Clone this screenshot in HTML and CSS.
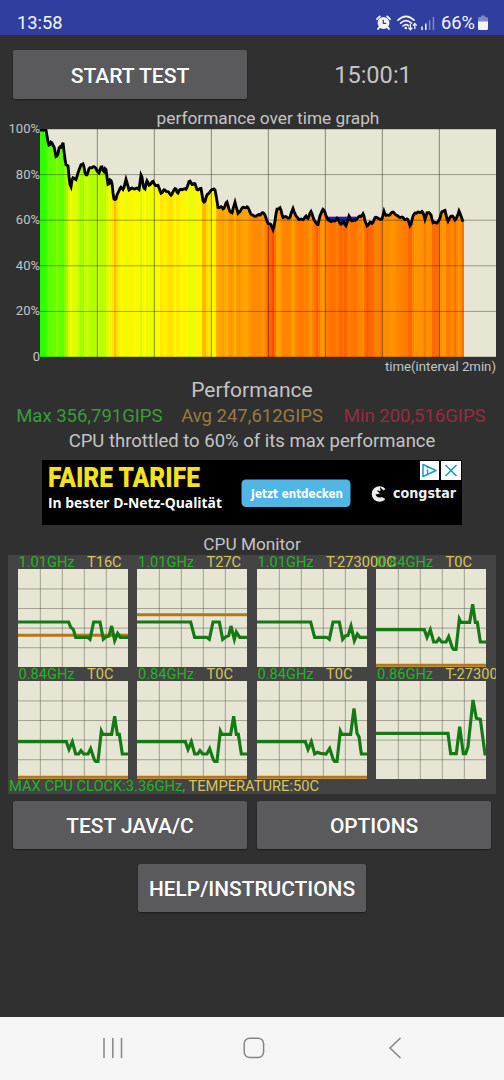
FILE: index.html
```html
<!DOCTYPE html>
<html lang="en">
<head>
    <meta charset="UTF-8">
    <meta name="viewport" content="width=device-width, initial-scale=1.0">
    <title>CPU Throttling Test</title>
    <link rel="stylesheet" href="styles.css">
</head>
<body>

    <header class="status-bar">
        <span class="clock">13:58</span>
        <div class="status-icons">
            <svg class="icon-alarm" width="15" height="15" viewBox="0 0 15 15">
                <circle cx="7.5" cy="8" r="5.9" fill="#f3f4fb"/>
                <path d="M1 4.2L3.8 1.4M14 4.2L11.2 1.4M3.2 12.4L2 14M11.8 12.4L13 14" stroke="#f3f4fb" stroke-width="1.8" stroke-linecap="round"/>
                <path d="M7.3 4.8V8.3H10.2" fill="none" stroke="#303f9f" stroke-width="1.3"/>
            </svg>
            <svg class="icon-wifi" width="21" height="16" viewBox="0 0 21 16">
                <path d="M1 5.2Q9 -2.4 17 5.2M3.6 8.2Q9 3.2 14.4 8.2M6 11Q9 8.4 11.4 10.6" fill="none" stroke="#f3f4fb" stroke-width="1.6" stroke-linecap="round"/>
                <circle cx="8.8" cy="13" r="1.3" fill="#f3f4fb"/>
                <path d="M13.4 9V14.6M11.4 12.6L13.4 14.8L15.4 12.6M17.8 14V8.6M15.9 10.6L17.8 8.4L19.7 10.6" fill="none" stroke="#f3f4fb" stroke-width="1.3"/>
            </svg>
            <svg class="icon-signal" width="14" height="14" viewBox="0 0 14 14">
                <path d="M1 14V10.6M4.8 14V7.6" stroke="#f3f4fb" stroke-width="1.5"/>
                <path d="M8.6 14V4.2M12.4 14V1" stroke="#7f88c6" stroke-width="1.5"/>
            </svg>
            <span class="percent">66%</span>
            <svg class="icon-battery" width="10" height="16" viewBox="0 0 10 16">
                <path d="M3 .5H7V2H8.5Q10 2 10 3.5V7H0V3.5Q0 2 1.5 2H3Z" fill="#7f88c6"/>
                <path d="M0 6.5H10V13.5Q10 15 8.5 15H1.5Q0 15 0 13.5Z" fill="#f3f4fb"/>
            </svg>
        </div>
    </header>

    <main class="app">
        <div class="row top-row">
            <button class="btn">START TEST</button>
            <div class="timer">15:00:1</div>
        </div>

        <div class="graph-title">performance over time graph</div>
        <div class="graph">
            <div class="y-axis">
                <span>100%</span>
                <span>80%</span>
                <span>60%</span>
                <span>40%</span>
                <span>20%</span>
                <span>0</span>
            </div>
            <svg class="plot" id="plot" viewBox="0 0 1368 684" preserveAspectRatio="none"></svg>
        </div>
        <div class="x-label">time(interval 2min)</div>

        <div class="perf-title">Performance</div>
        <div class="row stats">
            <span class="max">Max 356,791GIPS</span>
            <span class="avg">Avg 247,612GIPS</span>
            <span class="min">Min 200,516GIPS</span>
        </div>
        <div class="throttle">CPU throttled to 60% of its max performance</div>

        <div class="ad">
            <svg width="420" height="65" viewBox="0 0 420 65">
                <text class="ad-head" x="6" y="26.5" textLength="152" lengthAdjust="spacingAndGlyphs">FAIRE TARIFE</text>
                <text class="ad-sub" x="6" y="48" textLength="174" lengthAdjust="spacingAndGlyphs">In bester D-Netz-Qualität</text>
                <rect x="199.5" y="19.5" width="109" height="27.5" rx="4.5" fill="#51b5e6"/>
                <text class="ad-cta" x="209" y="38" textLength="92" lengthAdjust="spacingAndGlyphs">Jetzt entdecken</text>
                <path d="M343.500 29A7.800 7.800 0 1 0 343.500 39L339.800 37A4.500 4.500 0 0 1 333.500 34.500L338 33.500L334.500 30.500L338.500 31L338 27L341.500 30.500Z" fill="#eee"/>
                <text class="ad-brand" x="351" y="38" textLength="63" lengthAdjust="spacingAndGlyphs">congstar</text>
            </svg>
            <div class="ad-badges">
                <svg width="19" height="19" viewBox="0 0 19 19">
                    <path d="M3 3.5V15.5L16 9.5Z" fill="none" stroke="#1a9cba" stroke-width="1.5" stroke-linejoin="round"/>
                    <path d="M7.5 8.5V13M7.5 5.8V7.3" stroke="#1a9cba" stroke-width="1.5"/>
                </svg>
                <svg width="20" height="19" viewBox="0 0 20 19">
                    <path d="M4.500 4L15.500 15M15.500 4L4.500 15" stroke="#1a9cba" stroke-width="1.6"/>
                </svg>
            </div>
        </div>

        <div class="monitor-title">CPU Monitor</div>
        <div class="monitor">
            <div class="cores" id="cores"></div>
            <div class="monitor-footer"><span class="clock-max">MAX CPU CLOCK:3.36GHz,</span> <span class="temp">TEMPERATURE:50C</span></div>
        </div>

        <div class="row bottom-row">
            <button class="btn">TEST JAVA/C</button>
            <button class="btn">OPTIONS</button>
        </div>
        <button class="btn btn-help">HELP/INSTRUCTIONS</button>
    </main>

    <nav class="nav-bar">
        <svg width="22" height="22" viewBox="0 0 22 22">
            <path d="M2 1V21M10.8 1V21M19.5 1V21" stroke="#858585" stroke-width="1.5"/>
        </svg>
        <svg width="22" height="22" viewBox="0 0 22 22">
            <rect x="1.2" y="1.2" width="19.4" height="19.4" rx="5.5" fill="none" stroke="#858585" stroke-width="1.5"/>
        </svg>
        <svg width="22" height="22" viewBox="0 0 22 22">
            <path d="M16.500 1L6 11L16.500 21" fill="none" stroke="#858585" stroke-width="1.5"/>
        </svg>
    </nav>

    <script src="script.js"></script>
</body>
</html>
```

FILE: styles.css
```css
* {
    box-sizing: border-box;
}

body {
    margin: 0;
    width: 504px;
    height: 1080px;
    display: flex;
    flex-direction: column;
    overflow: hidden;
    background-color: #303030;
    color: #c4c4c4;
    font-family: Roboto, "Liberation Sans", sans-serif;
}

svg {
    display: block;
    flex-shrink: 0;
}

/* Status bar */
.status-bar {
    height: 35px;
    padding: 10px 16px 0 17px;
    display: flex;
    justify-content: space-between;
    background-color: #303f9f;
    color: #f3f4fb;
    font-size: 18.3px;
    line-height: 26px;
}

.status-icons {
    display: flex;
    align-items: center;
}

.icon-wifi {
    margin-left: 6px;
}

.icon-signal {
    margin: 0 6px 0 3px;
}

.icon-battery {
    margin-left: 3px;
}

/* Main screen */
.app {
    flex: 1;
    padding: 15px 8px 0;
    display: flex;
    flex-direction: column;
}

.row {
    display: flex;
}

.btn {
    flex: 1;
    height: 48px;
    margin: 0 5px;
    padding: 1px 0 0;
    border: none;
    border-radius: 2px;
    background-color: #5a5a5c;
    box-shadow: 0 1px 2px rgba(0, 0, 0, 0.4);
    color: #fff;
    font-family: inherit;
    font-size: 20.9px;
    font-weight: 500;
}

.top-row .btn {
    height: 49px;
    padding-top: 2px;
    font-size: 21.1px;
}

.timer {
    flex: 1;
    margin: 0 6px 0 4px;
    line-height: 50px;
    text-align: center;
    font-size: 23.6px;
}

.graph-title {
    margin: 8px 0 0 32px;
    height: 21px;
    line-height: 21px;
    text-align: center;
    font-size: 17.3px;
}

.graph {
    display: flex;
    height: 228px;
}

.y-axis {
    width: 32px;
    margin: -8px 0;
    display: flex;
    flex-direction: column;
    justify-content: space-between;
    align-items: flex-end;
    font-size: 13px;
    line-height: 16px;
}

.plot {
    width: 456px;
    height: 228px;
    background-color: #e7e6d4;
}

.x-label {
    height: 20px;
    line-height: 20px;
    text-align: right;
    font-size: 13.2px;
}

.perf-title {
    height: 27px;
    line-height: 27px;
    text-align: center;
    font-size: 21px;
}

.stats {
    height: 25px;
    line-height: 25px;
    font-size: 18.5px;
}

.stats span {
    flex: 1;
    text-align: center;
}

.stats .max {
    color: #3c9a3c;
}

.stats .avg {
    color: #9a7a40;
}

.stats .min {
    color: #962c42;
}

.throttle {
    height: 31px;
    line-height: 25px;
    text-align: center;
    font-size: 18.5px;
}

/* Banner */
.ad {
    position: relative;
    width: 420px;
    height: 65px;
    margin: 0 34px;
    background-color: #000;
}

.ad-head {
    fill: #f3e21c;
    font-size: 27px;
    font-weight: 900;
}

.ad-sub {
    fill: #fff;
    font-family: "Open Sans", sans-serif;
    font-size: 14px;
    font-weight: 700;
}

.ad-cta {
    fill: #fff;
    font-family: "DejaVu Sans", sans-serif;
    font-size: 11.5px;
    font-weight: 700;
}

.ad-brand {
    fill: #eee;
    font-family: "DejaVu Sans", sans-serif;
    font-size: 13.5px;
    font-weight: 700;
}

.ad-badges {
    position: absolute;
    top: 1px;
    right: 1px;
    display: flex;
    gap: 2px;
}

.ad-badges svg {
    background-color: #fff;
}

/* CPU monitor */
.monitor-title {
    height: 30px;
    padding-top: 8px;
    line-height: 22px;
    text-align: center;
    font-size: 17.3px;
}

.monitor {
    height: 239px;
    overflow: hidden;
    background-color: #444;
    font-size: 14.6px;
}

.cores {
    display: grid;
    grid-template-columns: repeat(4, 110px);
    column-gap: 9.5px;
    padding-left: 9.5px;
}

.core-label {
    display: flex;
    height: 14px;
    line-height: 15px;
    white-space: nowrap;
    color: #d8c45c;
}

.core-label .freq {
    flex-shrink: 0;
    width: 69.5px;
    padding-left: 1px;
    color: #25b32b;
}

.core-plot {
    width: 110px;
    height: 98px;
    background-color: #e7e6d4;
}

.monitor-footer {
    padding-left: 1px;
    line-height: 15px;
    white-space: nowrap;
    font-size: 14.7px;
}

.monitor-footer .clock-max {
    color: #25b32b;
}

.monitor-footer .temp {
    color: #d8c45c;
}

.bottom-row {
    margin-top: 7px;
}

.btn-help {
    flex: none;
    align-self: center;
    width: 228px;
    margin-top: 15px;
}

/* Navigation bar */
.nav-bar {
    height: 63px;
    padding: 0 98px 2px 102px;
    display: flex;
    justify-content: space-between;
    align-items: center;
    background-color: #f5f5f5;
}
```

FILE: script.js
```javascript
// performance samples, [x, y] in plot units (1368 x 684, top is 100%)
const samples = [
    [0,3],[18,3],[23,35],[28,49],[34,39],[38,49],[43,53],[48,83],[53,83],[58,50],[64,55],[69,43],[74,83],[78,106],[84,113],[88,153],
    [92,178],[97,148],[108,150],[116,128],[123,105],[130,106],[136,136],[142,136],[148,118],[158,113],[168,118],[177,133],[185,108],
    [191,131],[197,116],[205,171],[211,151],[216,163],[221,208],[227,216],[232,193],[242,176],[250,180],[258,153],[267,181],[280,178],
    [297,180],[304,131],[310,176],[315,178],[320,155],[327,168],[338,158],[346,168],[354,171],[364,193],[374,182],[385,190],[392,198],
    [400,188],[407,176],[413,193],[422,180],[438,181],[448,156],[456,165],[464,163],[470,181],[483,180],[489,213],[494,221],[502,195],
    [512,187],[524,176],[531,218],[534,235],[542,233],[550,241],[560,218],[568,243],[576,253],[585,218],[594,255],[605,238],[622,233],
    [632,253],[642,263],[652,258],[660,259],[667,248],[676,261],[685,285],[693,287],[700,303],[705,278],[710,239],[721,238],[728,263],
    [740,265],[750,266],[759,237],[768,263],[778,270],[788,273],[797,260],[803,271],[812,245],[820,268],[827,278],[833,293],[840,258],
    [850,241],[856,250],[860,268],[870,275],[883,278],[892,265],[899,283],[905,285],[910,275],[917,291],[927,263],[933,273],[945,276],
    [955,263],[963,263],[970,251],[975,278],[981,290],[990,281],[997,283],[1004,267],[1015,266],[1025,275],[1032,245],[1037,261],
    [1050,256],[1061,248],[1070,261],[1085,265],[1095,270],[1103,271],[1111,291],[1119,263],[1125,251],[1138,251],[1147,246],
    [1155,271],[1161,250],[1173,256],[1179,281],[1190,281],[1199,273],[1205,246],[1215,246],[1223,276],[1233,263],[1238,258],
    [1246,277],[1257,245],[1263,263],[1271,281]
];

// percent -> bar colour
const colors = [
    [100, 40, 255], [93, 100, 255], [90, 105, 255], [83, 180, 255], [79, 215, 255], [74, 255, 250],
    [71, 255, 220], [68, 255, 180], [65, 255, 158], [62, 255, 138], [60, 255, 118], [56, 255, 75]
];

function barColor(p) {
    for (let i = 1; i < colors.length; i++) {
        const a = colors[i - 1], b = colors[i];
        if (p >= b[0]) {
            const t = (a[0] - p) / (a[0] - b[0]);
            return `rgb(${Math.round(a[1] + (b[1] - a[1]) * t)},${Math.round(a[2] + (b[2] - a[2]) * t)},0)`;
        }
    }
    return 'rgb(255,75,0)';
}

function valueAt(x) {
    for (let i = 1; i < samples.length; i++) {
        const a = samples[i - 1], b = samples[i];
        if (x <= b[0]) {
            return a[1] + (b[1] - a[1]) * (x - a[0]) / (b[0] - a[0]);
        }
    }
    return samples[samples.length - 1][1];
}

function drawGraph() {
    let out = '';
    const line = [];
    for (let x = 0; x < 1271; x += 6) {
        const y = valueAt(x + 3);
        out += `<rect x="${x}" y="${y}" width="${Math.min(7, 1272 - x)}" height="${684 - y}" fill="${barColor(100 - y / 6.84)}"/>`;
    }
    for (let x = 0; x <= 1271; x += 3) {
        // small ripple of the measured values
        const ripple = x < 20 ? 0 : Math.sin(x * 1.7) * 2;
        line.push(`${x},${(valueAt(x) + ripple).toFixed(1)}`);
    }
    out += '<path d="M860 270H950" stroke="#1c1cd8" stroke-width="14"/>';
    out += `<polyline points="${line.join(' ')}" fill="none" stroke="#000" stroke-width="8.5"/>`;
    let vertical = '';
    let horizontal = '';
    for (let i = 1; i < 8; i++) vertical += `M${i * 171 + 1} 0V684`;
    for (let i = 0; i < 6; i++) horizontal += `M0 ${i * 136.8}H1368`;
    out += `<path d="${vertical}" stroke="#000" stroke-opacity="0.42" stroke-width="3"/>`;
    out += `<path d="${horizontal}" stroke="#000" stroke-opacity="0.34" stroke-width="3"/>`;
    document.getElementById('plot').innerHTML = out;
}

const big = '0,159 161,159 173,205 209,205 217,211 228,159 247,159 257,211 ';
const little = '0,182 145,182 153,205 163,182 173,219 182,219 189,209 197,219 210,219 218,203 229,236 233,241 240,241 250,150 255,160 281,160 290,106 298,160 304,160 313,219 330,219';

const cores = [
    { freq: '1.01GHz', temp: 'T16C', tempY: 199, line: '0,159 152,159 158,175 166,181 173,205 209,205 216,211 227,159 246,159 256,211 265,203 273,201 281,171 290,215 299,193 307,205 330,205' },
    { freq: '1.01GHz', temp: 'T27C', tempY: 137, line: big + '267,203 275,200 282,171 292,211 298,189 308,205 330,205' },
    { freq: '1.01GHz', temp: 'T-273000C', line: big + '265,201 273,199 282,171 292,215 301,195 309,205 330,205' },
    { freq: '0.84GHz', temp: 'T0C', tempY: 289, line: little },
    { freq: '0.84GHz', temp: 'T0C', tempY: 289, line: little },
    { freq: '0.84GHz', temp: 'T0C', tempY: 289, line: little },
    { freq: '0.84GHz', temp: 'T0C', tempY: 289, line: '0,182 145,182 153,205 163,182 173,219 182,214 190,217 207,219 218,202 229,236 233,241 240,241 250,150 255,160 281,160 291,82 300,157 306,167 313,219 330,219' },
    { freq: '0.86GHz', temp: 'T-273000C', line: '0,157 216,157 224,218 241,218 251,137 262,218 269,218 276,197 291,57 301,112 313,115 327,219 330,219' }
];

function drawCores() {
    let grid = '';
    for (let i = 1; i < 5; i++) grid += `M${i * 66 + 1} 0V294M0 ${i * 58.8 + 1}H330`;
    document.getElementById('cores').innerHTML = cores.map(core => `
        <div class="core">
            <div class="core-label"><span class="freq">${core.freq}</span><span>${core.temp}</span></div>
            <svg class="core-plot" viewBox="0 0 330 294">
                <path d="${grid}" stroke="#000" stroke-opacity="0.3" stroke-width="3"/>
                ${core.tempY ? `<path d="M0 ${core.tempY}H330" stroke="#b5761a" stroke-width="9"/>` : ''}
                <polyline points="${core.line}" fill="none" stroke="#157a15" stroke-width="9.5"/>
            </svg>
        </div>`).join('');
}

drawGraph();
drawCores();
```
